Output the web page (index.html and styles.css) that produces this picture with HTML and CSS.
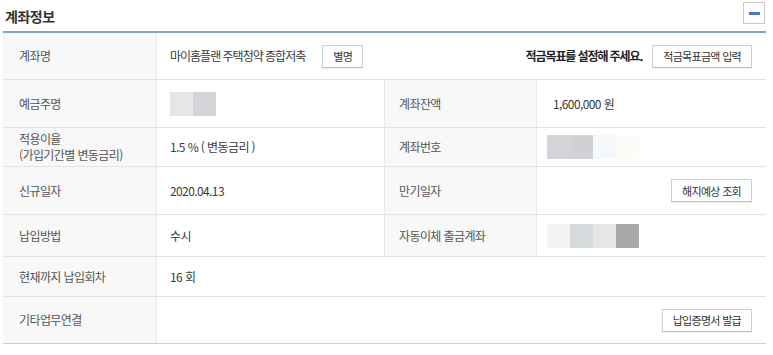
FILE: index.html
```html
<!DOCTYPE html>
<html lang="ko">
<head>
  <meta charset="UTF-8">
  <meta name="viewport" content="width=device-width, initial-scale=1">
  <title>계좌정보</title>
  <link rel="stylesheet" href="styles.css">
</head>

<body>
  <div class="section">
    <div class="section-head">
      <h2>계좌정보</h2>
      <button class="fold" title="접기"><span></span></button>
    </div>

    <table class="info">
      <colgroup>
        <col class="c-label">
        <col class="c-value">
        <col class="c-label2">
        <col class="c-value2">
      </colgroup>
      <tr class="r1">
        <th>계좌명</th>
        <td colspan="3">
          <div class="split">
            <div class="inline">
              <span class="name">마이홈플랜 주택청약 종합저축</span>
              <button class="btn">별명</button>
            </div>
            <div class="inline">
              <strong class="goal">적금목표를 설정해 주세요.</strong>
              <button class="btn">적금목표금액 입력</button>
            </div>
          </div>
        </td>
      </tr>
      <tr class="r2">
        <th>예금주명</th>
        <td>
          <div class="mask">
            <i style="background:#e6e6e8"></i><i style="background:#d3d4d7"></i>
          </div>
        </td>
        <th class="th2">계좌잔액</th>
        <td class="td2">1,600,000 원</td>
      </tr>
      <tr class="r3">
        <th class="two">적용이율<br>(가입기간별 변동금리)</th>
        <td>1.5 % ( 변동금리 )</td>
        <th class="th2">계좌번호</th>
        <td class="td2">
          <div class="mask">
            <i style="background:#d2d4d7"></i><i style="background:#cfd1d4"></i><i style="background:#f6f9fc"></i><i style="background:#fdfbf7"></i>
          </div>
        </td>
      </tr>
      <tr class="r4">
        <th>신규일자</th>
        <td>2020.04.13</td>
        <th class="th2">만기일자</th>
        <td class="td2 right"><button class="btn">해지예상 조회</button></td>
      </tr>
      <tr class="r5">
        <th>납입방법</th>
        <td>수시</td>
        <th class="th2">자동이체 출금계좌</th>
        <td class="td2">
          <div class="mask">
            <i style="background:#f3f3f3"></i><i style="background:#d5dadd"></i><i style="background:#e6e6e4"></i><i style="background:#a9a9a9"></i>
          </div>
        </td>
      </tr>
      <tr class="r6">
        <th>현재까지 납입회차</th>
        <td colspan="3">16 회</td>
      </tr>
      <tr class="r7 last">
        <th>기타업무연결</th>
        <td colspan="3" class="right"><button class="btn">납입증명서 발급</button></td>
      </tr>
    </table>
  </div>
</body>
</html>
```

FILE: styles.css
```css
body {
  margin: 0;
  font-family: "Noto Sans CJK KR", "Noto Sans", sans-serif;
  font-size: 12px;
  color: #3a3a3a;
  background: #fff;
}
.section {
  width: 763px;
  margin-left: 3px;
}
.section-head {
  height: 31px;
  display: flex;
  align-items: flex-start;
  justify-content: space-between;
}
.section-head h2 {
  margin: 6px 0 0 2px;
  font-size: 14px;
  font-weight: 700;
  color: #333;
  letter-spacing: -0.5px;
  line-height: 20px;
}
.fold {
  width: 22px;
  height: 22px;
  margin: 2px 1px 0 0;
  padding: 0;
  border: 1px solid #c8c8c8;
  background: #fff;
  display: flex;
  align-items: center;
  justify-content: center;
  cursor: pointer;
}
.fold span {
  display: block;
  width: 11px;
  height: 3px;
  background: #4a78b5;
}
.info {
  width: 100%;
  table-layout: fixed;
  border-collapse: separate;
  border-spacing: 0;
  border-top: 2px solid #86a2c6;
}
.c-label { width: 154px; }
.c-value { width: 227px; }
.c-label2 { width: 153px; }
.c-value2 { width: 229px; }
.info th,
.info td {
  box-sizing: border-box;
  border-bottom: 1px solid #e3e3e3;
  padding: 0 0 0 13px;
  text-align: left;
  vertical-align: middle;
  font-weight: 400;
  letter-spacing: -0.6px;
  line-height: 16px;
}
.info th {
  background: #f8f8f8;
  color: #555;
  padding-left: 16px;
  border-right: 1px solid #e8e8e8;
}
.info th.th2 {
  padding-left: 14px;
  border-left: 1px solid #e8e8e8;
}
.info td.td2 { padding-left: 16px; }
.info tr.last th,
.info tr.last td { border-bottom-color: #cfcfcf; }
.r1 th, .r1 td { height: 47px; }
.r2 th, .r2 td { height: 48px; }
.r3 th, .r3 td { height: 39px; }
.r4 th, .r4 td { height: 48px; }
.r5 th, .r5 td { height: 42px; }
.r6 th, .r6 td { height: 40px; }
.r7 th, .r7 td { height: 47px; }
.info td.right {
  text-align: right;
  padding-right: 14px;
}
.split {
  display: flex;
  align-items: center;
  justify-content: space-between;
  padding-right: 14px;
}
.inline {
  display: flex;
  align-items: center;
}
.name { letter-spacing: -1px; }
.goal {
  font-weight: 700;
  color: #222;
  letter-spacing: -1.1px;
  margin-right: 10px;
}
.btn {
  height: 23px;
  padding: 0 10px;
  border: 1px solid #cfcfcf;
  border-bottom-color: #bdbdbd;
  background: #fff;
  font-family: inherit;
  font-size: 11px;
  letter-spacing: -0.7px;
  color: #333;
  cursor: pointer;
  box-shadow: 0 1px 1px rgba(0, 0, 0, 0.06);
}
.name + .btn { margin-left: 17px; }
.mask {
  display: flex;
  height: 24px;
}
.mask i {
  display: block;
  width: 23px;
  height: 24px;
}
.td2 .mask { margin-left: -6px; }
```
